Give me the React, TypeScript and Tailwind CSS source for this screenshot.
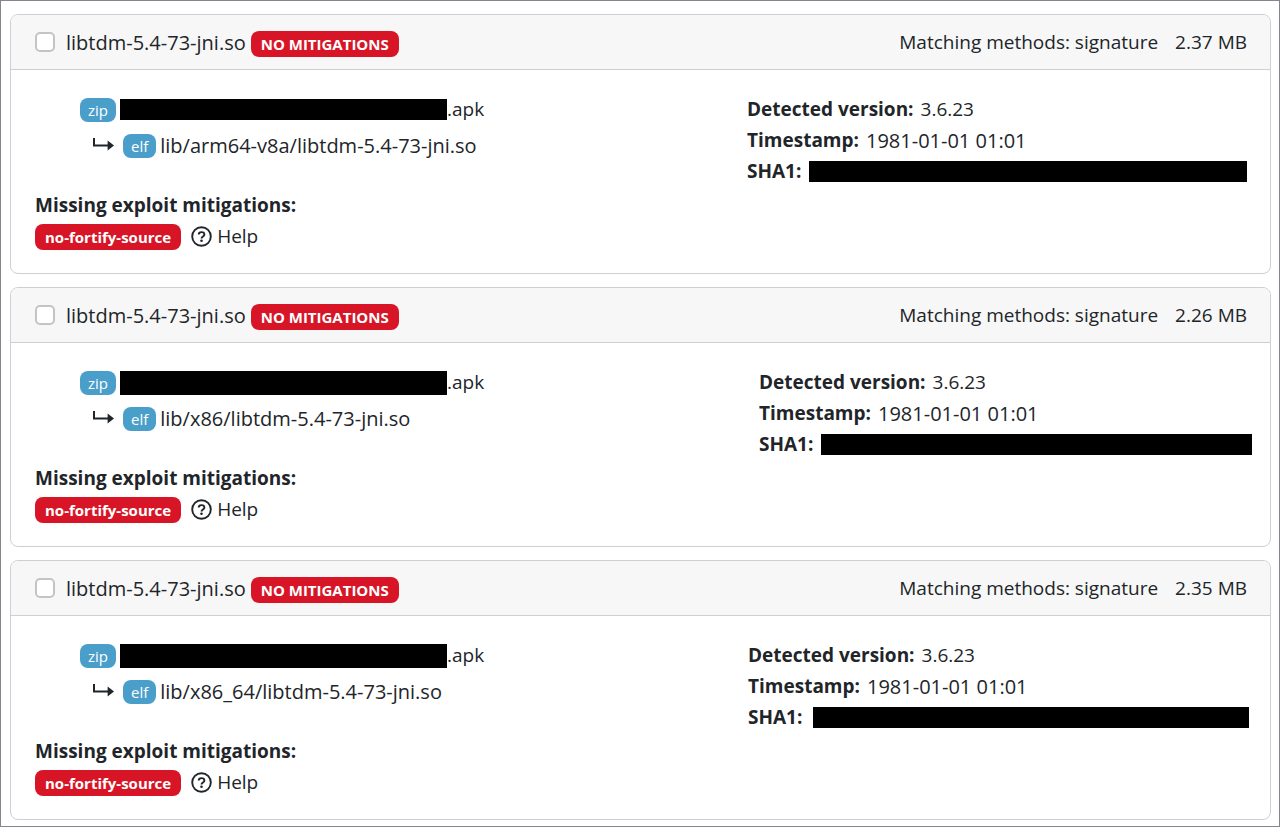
import { useState } from "react";

// Types
type Match = {
  id: number;
  fileName: string;
  size: string;
  libPath: string;
  version: string;
  timestamp: string;
  archiveMask: string;
  details: string;
  hashMask: string;
};

const matches: Match[] = [
  {
    id: 1,
    fileName: "libtdm-5.4-73-jni.so",
    size: "2.37 MB",
    libPath: "lib/arm64-v8a/libtdm-5.4-73-jni.so",
    version: "3.6.23",
    timestamp: "1981-01-01 01:01",
    archiveMask: "h-[21px]",
    details: "-mr-px w-[500px]",
    hashMask: "w-[438px]",
  },
  {
    id: 2,
    fileName: "libtdm-5.4-73-jni.so",
    size: "2.26 MB",
    libPath: "lib/x86/libtdm-5.4-73-jni.so",
    version: "3.6.23",
    timestamp: "1981-01-01 01:01",
    archiveMask: "h-6",
    details: "-mr-[6px] w-[493px]",
    hashMask: "w-[431px]",
  },
  {
    id: 3,
    fileName: "libtdm-5.4-73-jni.so",
    size: "2.35 MB",
    libPath: "lib/x86_64/libtdm-5.4-73-jni.so",
    version: "3.6.23",
    timestamp: "1981-01-01 01:01",
    archiveMask: "h-6",
    details: "-mr-[3px] w-[501px]",
    hashMask: "w-[436px]",
  },
];

const ArrowIcon = () => (
  <svg width="22" height="16" viewBox="0 0 22 16" className="shrink-0" aria-hidden="true">
    <path d="M2 0v7.5h14.5" fill="none" stroke="#212529" strokeWidth="2" />
    <path d="M15.6 2.6 22 7.5 15.6 12.4z" fill="#212529" />
  </svg>
);

const HelpIcon = () => (
  <svg width="22" height="22" viewBox="0 0 22 22" className="shrink-0" aria-hidden="true">
    <circle cx="10.5" cy="10.5" r="9.3" fill="none" stroke="#212529" strokeWidth="1.9" />
    <path
      d="M7.7 8.6C7.7 7 8.9 6.1 10.5 6.1s2.9.9 2.9 2.4c0 1.9-2.9 2-2.9 3.9"
      fill="none"
      stroke="#212529"
      strokeWidth="1.9"
    />
    <circle cx="10.5" cy="14.8" r="1.3" fill="#212529" />
  </svg>
);

const TypeBadge = ({ label }: { label: string }) => (
  <span className="flex h-6 shrink-0 items-center rounded-lg bg-[#4a9eca] px-2 pt-[2px] text-[15px] text-white">
    {label}
  </span>
);

const DangerBadge = ({ label }: { label: string }) => (
  <span className="flex h-[26px] shrink-0 items-center rounded-lg bg-[#d71526] px-[10px] pt-px text-[15px] font-bold text-white">
    {label}
  </span>
);

const MatchCard = ({ match }: { match: Match }) => {
  const [checked, setChecked] = useState(false);

  return (
    <section className="rounded-lg border border-[#cfcfd2] bg-white">

      {/* Header */}
      <div className="flex h-[55px] items-center justify-between rounded-t-[7px] border-b border-[#cfcfd2] bg-[#f7f7f7] pr-[23px] pl-6">
        <div className="flex items-center">
          <input
            id={`match-${match.id}`}
            type="checkbox"
            checked={checked}
            onChange={(e) => setChecked(e.target.checked)}
            className="mr-[11px] size-5 appearance-none rounded-[5px] border-2 border-[#c4c4c6] bg-white checked:bg-[#4a9eca]"
          />
          <label htmlFor={`match-${match.id}`} className="mr-[5px] text-xl leading-[31px]">
            {match.fileName}
          </label>
          <div className="pt-[3px]">
            <DangerBadge label="NO MITIGATIONS" />
          </div>
        </div>
        <div className="flex gap-[17px] pt-px">
          <span>Matching methods: signature</span>
          <span>{match.size}</span>
        </div>
      </div>

      {/* Body */}
      <div className="px-6 pt-6 pb-[21px]">
        <div className="flex justify-between">
          <div className="pl-[45px]">
            <div className="flex h-[31px] items-center">
              <TypeBadge label="zip" />
              <span className={`ml-1 w-[327px] bg-black ${match.archiveMask}`} />
              <span>.apk</span>
            </div>
            <div className="mt-[5px] flex h-[31px] items-center pl-3">
              <ArrowIcon />
              <span className="ml-[9px] mr-1">
                <TypeBadge label="elf" />
              </span>
              <span className="text-xl leading-[31px]">{match.libPath}</span>
            </div>
          </div>

          <div className={match.details}>
            <p className="flex gap-[7px]">
              <strong>Detected version:</strong>
              <span>{match.version}</span>
            </p>
            <p className="flex gap-[7px]">
              <strong>Timestamp:</strong>
              <span className="text-xl leading-[31px]">{match.timestamp}</span>
            </p>
            <p className="flex items-center justify-between">
              <strong>SHA1:</strong>
              <span className={`h-[21px] shrink-0 bg-black ${match.hashMask}`} />
            </p>
          </div>
        </div>

        <h3 className="mt-[3px] font-bold">Missing exploit mitigations:</h3>
        <div className="flex h-[31px] items-center gap-[10px]">
          <DangerBadge label="no-fortify-source" />
          <a href="#help" className="flex items-center gap-1">
            <HelpIcon />
            Help
          </a>
        </div>
      </div>
    </section>
  );
};

const App = () => {
  return (
    <main className="flex flex-col gap-[13px] border border-[#85858f] bg-white pt-[13px] pr-2 pb-[6px] pl-[9px] font-['Open_Sans','Noto_Sans',sans-serif] text-[19px] leading-[31px] text-[#212529]">
      {matches.map((m) => (
        <MatchCard key={m.id} match={m} />
      ))}
    </main>
  );
};

export default App;
